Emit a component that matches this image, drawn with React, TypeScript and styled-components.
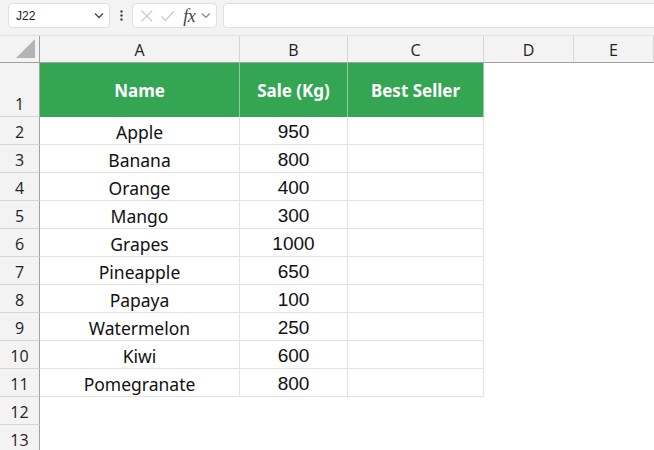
import React from "react";
import styled, { createGlobalStyle, css } from "styled-components";

const GlobalStyle = createGlobalStyle`
    html, body {
        margin: 0;
        padding: 0;
        background: #ffffff;
        overflow: hidden;
    }
    body {
        font-family: "Noto Sans", "Open Sans", sans-serif;
    }
`;

const Page = styled.div`
    width: 654px;
    height: 450px;
    overflow: hidden;
    background: #ffffff;
`;

const FormulaBar = styled.div`
    height: 36px;
    box-sizing: border-box;
    background: #f3f3f3;
    display: flex;
    align-items: flex-start;
    padding: 3px 0 0 8px;
    border-bottom: 1px solid #e2e2e2;
`;

const Box = styled.div`
    height: 25px;
    box-sizing: border-box;
    background: #ffffff;
    border: 1px solid #e0e0e0;
    border-radius: 4px;
    display: flex;
    align-items: center;
`;

const NameBox = styled(Box)`
    width: 102px;
    padding: 0 5px 0 7px;
    justify-content: space-between;
    font-family: "Liberation Sans", Arial, sans-serif;
    font-size: 12px;
    color: #222;
`;

const Dots = styled.div`
    width: 22px;
    display: flex;
    justify-content: center;
    padding-top: 7px;
`;

const FxBox = styled(Box)`
    width: 85px;
    padding: 0 5px 0 7px;
    gap: 6px;
`;

const Fx = styled.span`
    font-family: "Liberation Serif", "Times New Roman", serif;
    font-style: italic;
    font-size: 18px;
    line-height: 1;
    color: #444;
    margin-left: 2px;
    letter-spacing: -0.5px;
`;

const InputBox = styled(Box)`
    flex: 1;
    margin-left: 6px;
    border-right: none;
    border-radius: 4px 0 0 4px;
`;

const Sheet = styled.div`
    display: grid;
    grid-template-columns: 40px 200px 108px 136px 90px 1fr;
    grid-template-rows: 27px 54px repeat(12, 28px);
`;

const Corner = styled.div`
    background: #f3f3f3;
    border-right: 1px solid #a0a0a0;
    border-bottom: 1px solid #a0a0a0;
    position: relative;
    &::after {
        content: "";
        position: absolute;
        right: 4px;
        bottom: 4px;
        width: 0;
        height: 0;
        border-left: 19px solid transparent;
        border-bottom: 19px solid #b4b4b4;
    }
`;

const ColHead = styled.div`
    background: #f3f3f3;
    border-right: 1px solid #d6d6d6;
    border-bottom: 1px solid #a0a0a0;
    display: flex;
    align-items: center;
    justify-content: center;
    font-family: "Open Sans", "Noto Sans", sans-serif;
    font-size: 16px;
    color: #222;
    padding-top: 1px;
`;

const RowHead = styled.div`
    background: #f3f3f3;
    border-right: 1px solid #a0a0a0;
    border-bottom: 1px solid #d6d6d6;
    display: flex;
    align-items: flex-end;
    justify-content: center;
    padding-bottom: 1px;
    box-sizing: border-box;
    font-family: "Open Sans", "Noto Sans", sans-serif;
    font-size: 16px;
    color: #222;
`;

const Cell = styled.div<{ $head?: boolean; $table?: boolean; $num?: boolean }>`
    display: flex;
    align-items: flex-end;
    justify-content: center;
    box-sizing: border-box;
    line-height: 24px;
    font-family: "Noto Sans", "Open Sans", sans-serif;
    font-size: 17.5px;
    color: #111;
    ${(p) =>
        p.$table &&
        css`
            border-right: 1px solid #e2e2e2;
            border-bottom: 1px solid #e2e2e2;
        `}
    ${(p) =>
        p.$num &&
        css`
            font-family: "Liberation Sans", Arial, sans-serif;
            font-size: 19px;
        `}
    ${(p) =>
        p.$head &&
        css`
            background: #33a553;
            color: #ffffff;
            font-weight: 700;
            font-size: 17px;
            align-items: center;
            padding: 2px 0 0;
            border-right: 1px solid #8fcf9f;
            border-bottom: none;
        `}
`;

const data = [
    { name: "Apple", sale: 950 },
    { name: "Banana", sale: 800 },
    { name: "Orange", sale: 400 },
    { name: "Mango", sale: 300 },
    { name: "Grapes", sale: 1000 },
    { name: "Pineapple", sale: 650 },
    { name: "Papaya", sale: 100 },
    { name: "Watermelon", sale: 250 },
    { name: "Kiwi", sale: 600 },
    { name: "Pomegranate", sale: 800 },
];

function Chevron({ color = "#444" }: { color?: string }) {
    return (
        <svg width="10" height="7" viewBox="0 0 10 7">
            <path d="M1 1.5 L5 5.5 L9 1.5" fill="none" stroke={color} strokeWidth="1.3" />
        </svg>
    );
}

export default function App() {
    return (
        <Page>
            <GlobalStyle />
            <FormulaBar>
                <NameBox>
                    J22
                    <Chevron />
                </NameBox>
                <Dots>
                    <svg width="3" height="11" viewBox="0 0 3 11">
                        <circle cx="1.5" cy="1.5" r="1.2" fill="#444" />
                        <circle cx="1.5" cy="5.5" r="1.2" fill="#444" />
                        <circle cx="1.5" cy="9.5" r="1.2" fill="#444" />
                    </svg>
                </Dots>
                <FxBox>
                    <svg width="14" height="14" viewBox="0 0 14 14">
                        <path d="M1.5 1.5 L12.5 12.5 M12.5 1.5 L1.5 12.5" stroke="#c4c4c4" strokeWidth="1.2" />
                    </svg>
                    <svg width="16" height="14" viewBox="0 0 16 14">
                        <path d="M1.5 7.5 L5.5 11.5 L14.5 2" fill="none" stroke="#c4c4c4" strokeWidth="1.2" />
                    </svg>
                    <Fx>fx</Fx>
                    <Chevron color="#888" />
                </FxBox>
                <InputBox />
            </FormulaBar>
            <Sheet>
                <Corner />
                {["A", "B", "C", "D", "E"].map((c) => (
                    <ColHead key={c}>{c}</ColHead>
                ))}

                <RowHead>1</RowHead>
                <Cell $head>Name</Cell>
                <Cell $head>Sale (Kg)</Cell>
                <Cell $head>Best Seller</Cell>
                <Cell />
                <Cell />

                {data.map((d, i) => (
                    <React.Fragment key={d.name}>
                        <RowHead>{i + 2}</RowHead>
                        <Cell $table>{d.name}</Cell>
                        <Cell $table $num>
                            {d.sale}
                        </Cell>
                        <Cell $table />
                        <Cell />
                        <Cell />
                    </React.Fragment>
                ))}

                {[12, 13].map((n) => (
                    <React.Fragment key={n}>
                        <RowHead>{n}</RowHead>
                        <Cell />
                        <Cell />
                        <Cell />
                        <Cell />
                        <Cell />
                    </React.Fragment>
                ))}
            </Sheet>
        </Page>
    );
}
